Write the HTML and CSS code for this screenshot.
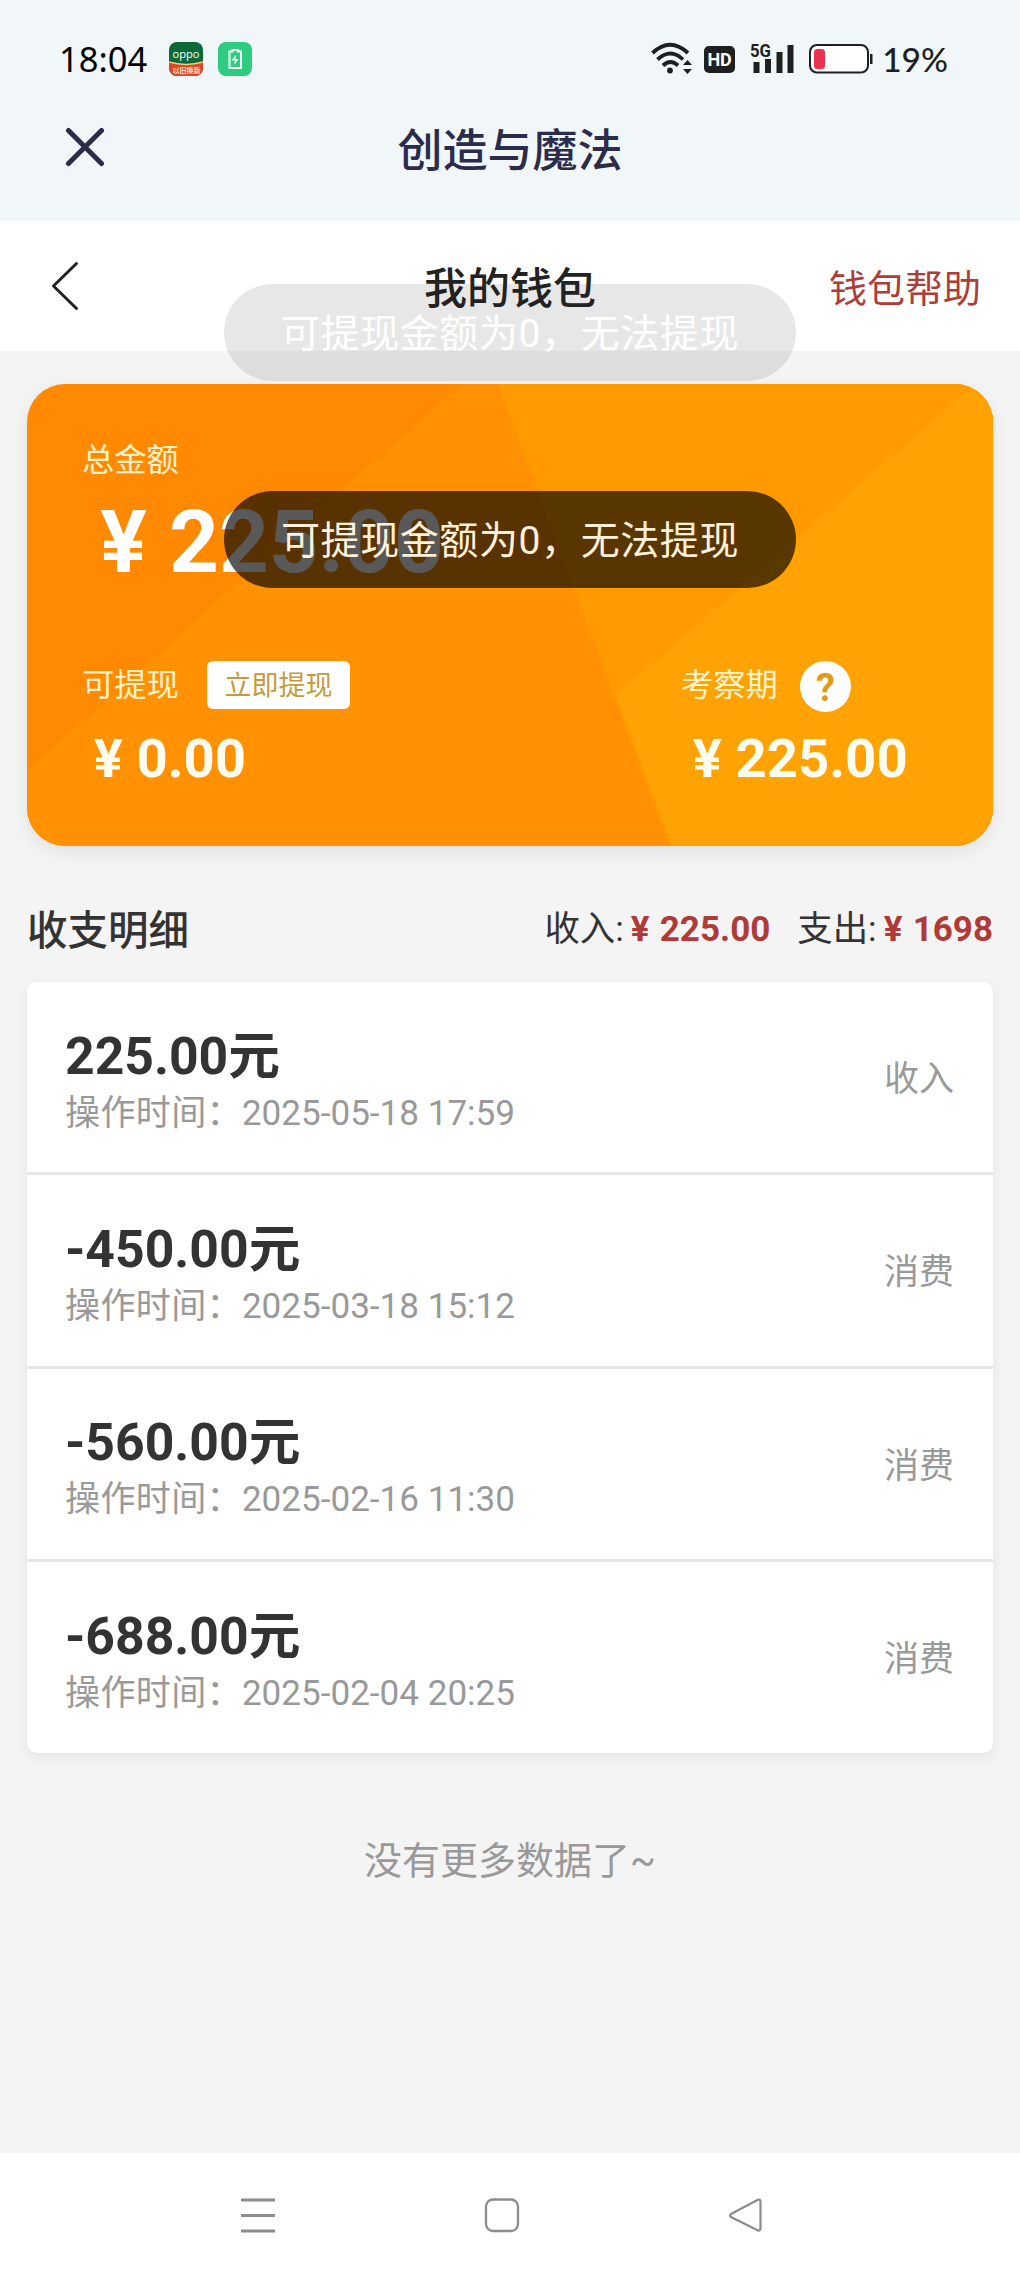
FILE: index.html
```html
<!DOCTYPE html>
<html lang="zh-CN">
<head>
    <meta charset="UTF-8">
    <meta name="viewport" content="width=device-width, initial-scale=1.0">
    <title>我的钱包</title>
    <link rel="stylesheet" href="styles.css">
</head>
<body>
    <div class="page">
        <header class="app-header">
            <div class="status-bar">
                <span class="time">18:04</span>
                <svg class="app-icon" width="34" height="34" viewBox="0 0 34 34">
                    <defs>
                        <clipPath id="round"><rect width="34" height="34" rx="8"/></clipPath>
                    </defs>
                    <g clip-path="url(#round)">
                        <rect width="34" height="34" fill="#0b6a35"/>
                        <path d="M0 20 Q17 25 34 20 V34 H0Z" fill="#e0452a"/>
                        <path d="M0 20 Q17 25 34 20" fill="none" stroke="#e8d27a" stroke-width="1.5"/>
                        <text x="17" y="16" class="oppo" textLength="27" lengthAdjust="spacingAndGlyphs">oppo</text>
                        <text x="17.500" y="31" class="oppo-sub" textLength="28" lengthAdjust="spacingAndGlyphs">以旧换新</text>
                    </g>
                </svg>
                <svg class="app-icon" width="34" height="34" viewBox="0 0 34 34">
                    <rect width="34" height="34" rx="8" fill="#2dcc80"/>
                    <path d="M11.500 9.500 H14.500 V8 H20 V9.500 H23 V26 H11.500Z" fill="none" stroke="#fff" stroke-width="2"/>
                    <path d="M18 12.500 L13.500 18.500 H17 L16 23 L20.500 17 H17.500Z" fill="#fff"/>
                </svg>
                <div class="status-right">
                    <svg width="42" height="34" viewBox="0 0 42 34">
                        <g fill="none" stroke="#1d201f" stroke-width="3.800">
                            <path d="M1.500 11 Q19 -5.500 37 11"/>
                            <path d="M6.500 17.500 Q19.500 5.500 32 17.500"/>
                            <path d="M12 23.500 Q19.500 16.500 27 23.500"/>
                        </g>
                        <circle cx="19" cy="28.500" r="2.900" fill="#1d201f"/>
                        <path d="M32 23 L36.500 18 L41 23Z M32 27 L36.500 32 L41 27Z" fill="#1d201f"/>
                    </svg>
                    <span class="hd">HD</span>
                    <svg class="signal" width="45" height="34" viewBox="0 0 45 34">
                        <text x="0" y="14.500" class="net" textLength="21" lengthAdjust="spacingAndGlyphs">5G</text>
                        <path d="M3.500 20h6v11h-6z M15 17h6v14h-6z M26.500 10h6v21h-6z M37.500 3h6v28h-6z" fill="#1d201f"/>
                    </svg>
                    <svg class="battery" width="64" height="34" viewBox="0 0 64 34">
                        <rect x="1" y="3" width="58" height="27.500" rx="7" fill="#fff" stroke="#1d201f" stroke-width="2"/>
                        <rect x="5" y="7" width="11" height="20" rx="3.500" fill="#ea334e"/>
                        <rect x="61" y="12" width="2.500" height="10" fill="#1d201f"/>
                    </svg>
                    <span class="percent">19%</span>
                </div>
            </div>
            <div class="app-bar">
                <svg class="close" width="40" height="40" viewBox="0 0 40 40">
                    <path d="M3.500 3.500 L36.500 36.500 M36.500 3.500 L3.500 36.500" stroke="#2b2c4b" stroke-width="5" stroke-linecap="round"/>
                </svg>
                <h1>创造与魔法</h1>
            </div>
        </header>

        <nav class="wallet-nav">
            <svg class="back" width="30" height="50" viewBox="0 0 30 50">
                <path d="M26.500 2.500 L3.500 25 L26.500 47.500" fill="none" stroke="#222" stroke-width="3" stroke-linecap="round" stroke-linejoin="round"/>
            </svg>
            <h2>我的钱包</h2>
            <a class="help">钱包帮助</a>
            <div class="toast toast-fading">可提现金额为0，无法提现</div>
        </nav>

        <main>
            <section class="card">
                <svg class="card-bg" width="966" height="462" viewBox="0 0 966 462">
                    <rect width="966" height="462" fill="#ff8900"/>
                    <path d="M434 0 L0 387 V462 H966 V0Z" fill="#ff9103"/>
                    <path d="M471 0 L643 462 H966 V0Z" fill="#ff9b00"/>
                    <path d="M589 311 L645 462 H966 V0 H948Z" fill="#ffa203"/>
                </svg>
                <div class="card-body">
                    <div class="label">总金额</div>
                    <div class="total"><i>¥</i>225.00</div>
                    <div class="balances">
                        <div class="balance">
                            <div class="label">可提现<span class="withdraw">立即提现</span></div>
                            <div class="amount"><i>¥</i>0.00</div>
                        </div>
                        <div class="balance">
                            <div class="label">考察期<span class="question">?</span></div>
                            <div class="amount"><i>¥</i>225.00</div>
                        </div>
                    </div>
                </div>
                <div class="toast">可提现金额为0，无法提现</div>
            </section>

            <div class="summary">
                <h3>收支明细</h3>
                <div class="sums">
                    <span>收入:<b><i>¥</i>225.00</b></span>
                    <span>支出:<b><i>¥</i>1698</b></span>
                </div>
            </div>

            <ul class="list">
                <li>
                    <div><div class="money">225.00元</div><div class="date"><span>操作时间：</span>2025-05-18 17:59</div></div>
                    <span class="type">收入</span>
                </li>
                <li>
                    <div><div class="money">-450.00元</div><div class="date"><span>操作时间：</span>2025-03-18 15:12</div></div>
                    <span class="type">消费</span>
                </li>
                <li>
                    <div><div class="money">-560.00元</div><div class="date"><span>操作时间：</span>2025-02-16 11:30</div></div>
                    <span class="type">消费</span>
                </li>
                <li>
                    <div><div class="money">-688.00元</div><div class="date"><span>操作时间：</span>2025-02-04 20:25</div></div>
                    <span class="type">消费</span>
                </li>
            </ul>
            <p class="no-more">没有更多数据了~</p>
        </main>

        <footer class="nav-bar">
            <svg width="36" height="36" viewBox="0 0 36 36">
                <path d="M1 3h34 M1 18.500h34 M1 34h34" stroke="#8c8c8c" stroke-width="3"/>
            </svg>
            <svg width="36" height="36" viewBox="0 0 36 36">
                <rect x="2" y="2.500" width="32" height="31.500" rx="7" fill="none" stroke="#8c8c8c" stroke-width="2.300"/>
            </svg>
            <svg width="36" height="36" viewBox="0 0 36 36">
                <path d="M31 2.800 L4 17 Q2 18.500 4 20 L31 33.500 Q33.500 34 33.500 31 V5 Q33.500 2 31 2.800Z" fill="none" stroke="#8c8c8c" stroke-width="2.200"/>
            </svg>
        </footer>
    </div>
</body>
</html>
```
FILE: styles.css
```css
* {
    box-sizing: border-box;
}

body {
    margin: 0;
    background-color: #f4f4f4;
    font-family: Roboto, "Noto Sans CJK SC", sans-serif;
    color: #333;
}

h1, h2, h3, p, ul {
    margin: 0;
    padding: 0;
    font-weight: 500;
}

i {
    font-style: normal;
}

svg {
    display: block;
    flex: none;
}

.page {
    height: 2278px;
    display: flex;
    flex-direction: column;
}

.app-header {
    height: 221px;
    background-color: #f1f6f9;
}

/* status bar */
.status-bar {
    height: 118px;
    padding: 0 72px 0 59px;
    display: flex;
    align-items: center;
}

.time {
    width: 110px;
    font: 34.5px/1 "Noto Sans", sans-serif;
    color: #000;
}

.app-icon {
    margin-right: 15px;
}

.oppo {
    font: 11px "Open Sans", sans-serif;
    fill: #fff;
    text-anchor: middle;
}

.oppo-sub {
    font: bold 7px "Noto Sans CJK SC", sans-serif;
    fill: #ffe3d0;
    text-anchor: middle;
}

.status-right {
    margin-left: auto;
    display: flex;
    align-items: center;
}

.hd {
    width: 31px;
    height: 27px;
    margin-left: 11px;
    border-radius: 5px;
    background-color: #1d201f;
    color: #fff;
    font: bold 18px/27px Roboto, sans-serif;
    text-align: center;
}

.signal {
    margin-left: 15px;
    overflow: visible;
}

.net {
    font: bold 18px Roboto, sans-serif;
    fill: #1d201f;
}

.battery {
    margin-left: 14px;
}

.percent {
    margin-left: 9px;
    padding-top: 2px;
    font: 500 33.5px/1 Lato, sans-serif;
    color: #1d201f;
}

.app-bar {
    display: grid;
    grid-template-columns: 65px 1fr 65px;
    align-items: center;
    height: 60px;
}

.close {
    margin: 0 0 6px 65px;
}

.app-bar h1 {
    padding-top: 4px;
    font-size: 45px;
    line-height: 60px;
    text-align: center;
    color: #2b2c4b;
}

/* wallet title row */
.wallet-nav {
    position: relative;
    height: 130px;
    padding: 0 39px 0 50px;
    background-color: #fff;
    display: grid;
    grid-template-columns: 1fr auto 1fr;
    align-items: center;
}

.wallet-nav h2 {
    position: relative;
    z-index: 2;
    margin-left: -11px;
    padding-top: 5px;
    font-size: 43px;
    line-height: 60px;
    color: #222;
}

.help {
    justify-self: end;
    padding-bottom: 2px;
    font-size: 38px;
    color: #ae3c38;
}

.toast {
    position: absolute;
    left: 197px;
    top: 107px;
    width: 572px;
    height: 97px;
    padding-top: 2px;
    border-radius: 49px;
    background-color: rgba(0, 0, 0, 0.65);
    color: #fff1dc;
    font-size: 39px;
    letter-spacing: 0.6px;
    line-height: 97px;
    text-align: center;
    white-space: nowrap;
}

.toast-fading {
    left: 224px;
    top: 63px;
    z-index: 1;
    background-color: rgba(0, 0, 0, 0.095);
    color: #fff;
}

main {
    flex: 1;
    padding: 33px 27px 0;
}

.card {
    position: relative;
    height: 462px;
    border-radius: 38px;
    box-shadow: 0 6px 18px rgba(0, 0, 0, 0.08);
}

.card-bg {
    position: absolute;
    border-radius: 38px;
}

.card-body {
    position: relative;
    padding: 48px 55px 0;
    color: #fffdf0;
}

.label {
    display: flex;
    align-items: center;
    height: 50px;
    font-size: 32.3px;
    color: #fff3cc;
}

.total, .amount {
    display: flex;
    font-weight: 700;
}

/* the currency sign takes a full em like the wide glyph */
.total i, .amount i, .sums i {
    display: inline-block;
    width: 1em;
    text-align: center;
}

.total {
    height: 100px;
    margin-top: 10px;
    color: #fff;
    font-size: 87px;
    line-height: 100px;
}

.total i {
    padding-right: 4px;
}

.balances {
    display: grid;
    grid-template-columns: 599px 1fr;
    margin-top: 65px;
}

.withdraw {
    width: 143px;
    height: 48px;
    margin: 6px 0 0 28px;
    padding-top: 1px;
    border-radius: 6px;
    background-color: #fff;
    color: #c69a3c;
    font-size: 27px;
    line-height: 48px;
    text-align: center;
}

.question {
    width: 51px;
    height: 51px;
    margin: 8px 0 0 22px;
    border-radius: 50%;
    background-color: #fff;
    color: #dd9c17;
    font-size: 38px;
    font-weight: 700;
    line-height: 54px;
    text-align: center;
}

.amount {
    margin-top: 21px;
    font-size: 54.5px;
    line-height: 60px;
}

.amount i {
    padding-right: 2px;
}

.summary {
    display: flex;
    justify-content: space-between;
    align-items: center;
    height: 136px;
    padding-top: 30px;
}

.summary h3 {
    padding-bottom: 4px;
    font-size: 40.5px;
}

.sums {
    display: flex;
    gap: 27px;
    font-size: 35.4px;
    line-height: 50px;
}

.sums b {
    font-size: 35px;
    color: #b03a38;
}

.sums i {
    width: 36px;
    padding-right: 3px;
}

.list {
    list-style: none;
    border-radius: 10px;
    background-color: #fff;
    box-shadow: 0 4px 14px rgba(0, 0, 0, 0.07);
    font-weight: 400;
}

.list li {
    display: flex;
    justify-content: space-between;
    align-items: center;
    height: 193.3px;
    padding: 0 39px 0 38px;
    border-bottom: 3px solid #e6e6e6;
}

.list li:last-child {
    height: 191px;
    border-bottom: none;
}

.money {
    padding-top: 9px;
    font-size: 51.7px;
    font-weight: 700;
    line-height: 62px;
}

.date {
    font-size: 35.1px;
    line-height: 50px;
    color: #999;
}

.date span {
    letter-spacing: 0.3px;
}

.type {
    padding-bottom: 3px;
    font-size: 35px;
    color: #999;
}

.no-more {
    margin-top: 80px;
    font-size: 38px;
    line-height: 56px;
    font-weight: 400;
    text-align: center;
    color: #999;
}

.nav-bar {
    height: 125px;
    padding: 0 257px 1px 240px;
    background-color: #fff;
    display: flex;
    justify-content: space-between;
    align-items: center;
}
```
